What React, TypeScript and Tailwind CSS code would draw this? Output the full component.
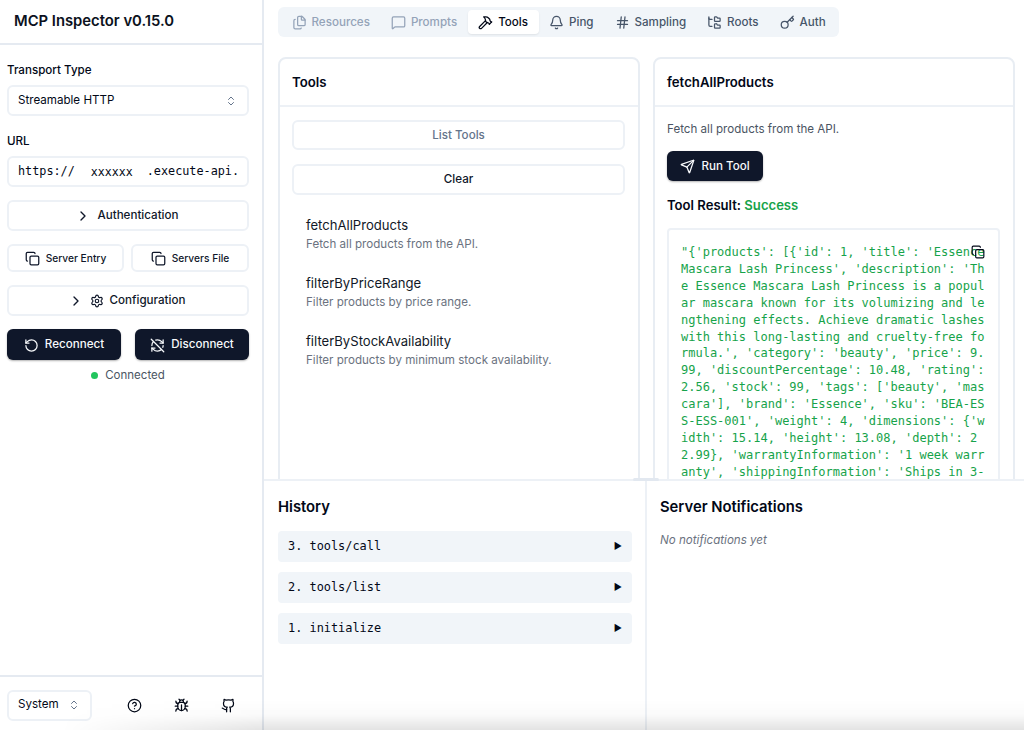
import React from "react";
import {
  Files, MessageSquare, Hammer, Bell, Hash, FolderTree, Key, ChevronsUpDown, ChevronRight, Settings,
  RotateCcw, RefreshCwOff, Copy, Send, CircleHelp, Bug, Github,
} from "lucide-react";

const RESULT = `"{'products': [{'id': 1, 'title': 'Essence Mascara Lash Princess', 'description': 'The Essence Mascara Lash Princess is a popular mascara known for its volumizing and lengthening effects. Achieve dramatic lashes with this long-lasting and cruelty-free formula.', 'category': 'beauty', 'price': 9.99, 'discountPercentage': 10.48, 'rating': 2.56, 'stock': 99, 'tags': ['beauty', 'mascara'], 'brand': 'Essence', 'sku': 'BEA-ESS-ESS-001', 'weight': 4, 'dimensions': {'width': 15.14, 'height': 13.08, 'depth': 22.99}, 'warrantyInformation': '1 week warranty', 'shippingInformation': 'Ships in 3-`;

const tabs = [
  { label: "Resources", Icon: Files, disabled: true },
  { label: "Prompts", Icon: MessageSquare, disabled: true },
  { label: "Tools", Icon: Hammer, active: true },
  { label: "Ping", Icon: Bell },
  { label: "Sampling", Icon: Hash },
  { label: "Roots", Icon: FolderTree },
  { label: "Auth", Icon: Key },
];

const tools = [
  ["fetchAllProducts", "Fetch all products from the API."],
  ["filterByPriceRange", "Filter products by price range."],
  ["filterByStockAvailability", "Filter products by minimum stock availability."],
];

function Outline({ children, className = "" }: { children: React.ReactNode; className?: string }) {
  return (
    <div className={"flex items-center justify-center rounded-md border-2 border-[#edf1f6] bg-white pt-[1px] font-medium text-[#0f172a] " + className}>
      {children}
    </div>
  );
}

function Dark({ children, className = "" }: { children: React.ReactNode; className?: string }) {
  return (
    <div className={"flex items-center justify-center rounded-md bg-[#0f172a] pt-[1px] text-[11.6px] font-medium text-[#f8fafc] shadow-[0_1px_2px_rgba(0,0,0,0.3)] " + className}>
      {children}
    </div>
  );
}

export default function App() {
  return (
    <div className="relative flex h-screen w-full overflow-hidden bg-white text-[#020817] [font-family:Inter,sans-serif]">
      <aside className="flex h-full w-[264px] shrink-0 flex-col border-r-2 border-[#e5eaf1]">
        <div className="flex h-[45px] shrink-0 items-center border-b-2 border-[#e5eaf1] pl-[14px]">
          <h1 className="text-[14.8px] font-semibold leading-none text-[#0b1120]">MCP Inspector v0.15.0</h1>
        </div>
        <div className="flex flex-1 flex-col pl-[7px] pr-[13px] pt-[16px]">
          <label className="text-[11.6px] font-medium leading-[18px]">Transport Type</label>
          <div className="mt-[6px] flex h-[31px] items-center justify-between rounded-md border-2 border-[#edf1f6] pl-[9px] pr-[10px] pt-[1px] text-[11.6px]">
            <span>Streamable HTTP</span>
            <ChevronsUpDown size={12} className="text-[#64748b]" />
          </div>
          <label className="mt-[16px] text-[11.6px] font-medium leading-[18px]">URL</label>
          <div className="mt-[6px] flex h-[31px] items-center overflow-hidden whitespace-nowrap rounded-md border-2 border-[#edf1f6] pl-[9px] pt-[1px] text-[11.8px] [font-family:'DejaVu_Sans_Mono',monospace]">
            <span>https://</span>
            <span className="ml-[16px] pt-[1px] text-[11.6px]">xxxxxx</span>
            <span className="ml-[14px]">.execute-api.</span>
          </div>
          <Outline className="mt-[13px] h-[31px] pr-[2px] text-[11.6px]">
            <ChevronRight size={16} className="mr-[6px]" />
            Authentication
          </Outline>
          <div className="mt-[13px] flex justify-between">
            <Outline className="h-[28px] w-[117px] text-[10.2px]">
              <Copy size={15} className="mr-[6px]" />
              Server Entry
            </Outline>
            <Outline className="h-[28px] w-[118px] text-[10.2px]">
              <Copy size={15} className="mr-[6px]" />
              Servers File
            </Outline>
          </div>
          <Outline className="mt-[13px] h-[31px] pr-[3px] text-[11.6px]">
            <ChevronRight size={16} className="mr-[6px]" />
            <Settings size={14} className="mr-[6px]" />
            Configuration
          </Outline>
          <div className="mt-[13px] flex justify-between">
            <Dark className="h-[31px] w-[114px]">
              <RotateCcw size={15} className="mr-[6px]" />
              Reconnect
            </Dark>
            <Dark className="h-[31px] w-[114px]">
              <RefreshCwOff size={15} className="mr-[6px]" />
              Disconnect
            </Dark>
          </div>
          <div className="mt-[7px] flex items-center justify-center text-[11.5px] leading-[16px] text-[#4b5563]">
            <span className="mr-[7px] h-[7px] w-[7px] rounded-full bg-[#22c55e]" />
            Connected
          </div>
        </div>
        <div className="flex h-[55px] shrink-0 items-center border-t-2 border-[#e5eaf1] pl-[7px] pt-[3px]">
          <div className="flex h-[31px] w-[85px] items-center justify-between rounded-md border-2 border-[#edf1f6] pl-[9px] pr-[10px] text-[11.6px]">
            System
            <ChevronsUpDown size={12} className="text-[#64748b]" />
          </div>
          <div className="ml-[35px] flex gap-[32px]">
            <CircleHelp size={15} />
            <Bug size={15} />
            <Github size={15} />
          </div>
        </div>
      </aside>

      <main className="flex min-w-0 flex-1 flex-col">
        <div className="h-[481px] shrink-0 overflow-hidden border-b-2 border-[#edf1f6] px-[14px] pt-[7px]">
          <div className="flex h-[30px] w-[561px] items-center rounded-md bg-[#f1f5f9] px-[3px] text-[11.6px] font-medium">
            {tabs.map(({ label, Icon, active, disabled }) => (
              <div
                key={label}
                className={
                  "flex h-[24px] items-center rounded px-[10.5px] pt-[1px] " +
                  (active
                    ? "bg-white text-[#020817] shadow-[0_1px_2px_rgba(0,0,0,0.08)]"
                    : disabled
                    ? "text-[#94a3b8]"
                    : "text-[#475569]")
                }
              >
                <Icon size={15} className="mr-[5px]" />
                {label}
              </div>
            ))}
          </div>

          <div className="mt-[20px] flex gap-[13px]">
            <section className="h-[500px] w-[362px] shrink-0 rounded-lg border-2 border-[#e8edf3]">
              <div className="flex h-[48px] items-center border-b-2 border-[#edf1f6] px-[12px] pt-[1px]">
                <h3 className="text-[13.2px] font-semibold">Tools</h3>
              </div>
              <div className="pl-[12px] pr-[13px] pt-[13px]">
                <Outline className="h-[30px] text-[11.6px]">
                  <span className="text-[#64748b]">List Tools</span>
                </Outline>
                <Outline className="mt-[14px] h-[31px] border-[#e2e8f0] text-[11.6px]">Clear</Outline>
                <div className="mt-[21px] flex flex-col gap-[21px] pl-[14px]">
                  {tools.map(([n, d]) => (
                    <div key={n}>
                      <div className="text-[13.1px] leading-[18px] text-[#111827]">{n}</div>
                      <div className="mt-[2px] text-[11.6px] leading-[17px] text-[#6b7280]">{d}</div>
                    </div>
                  ))}
                </div>
              </div>
            </section>

            <section className="h-[500px] w-[362px] shrink-0 rounded-lg border-2 border-[#e8edf3]">
              <div className="flex h-[48px] items-center border-b-2 border-[#edf1f6] px-[12px] pt-[1px]">
                <h3 className="text-[13.2px] font-semibold">fetchAllProducts</h3>
              </div>
              <div className="pl-[12px] pr-[13px] pt-[14px]">
                <p className="text-[11.6px] leading-[17px] text-[#4b5563]">Fetch all products from the API.</p>
                <Dark className="mt-[13px] h-[30px] w-[96px]">
                  <Send size={15} className="mr-[6px]" />
                  Run Tool
                </Dark>
                <h4 className="mt-[14px] text-[13.1px] font-semibold leading-[20px]">
                  Tool Result: <span className="text-[#16a34a]">Success</span>
                </h4>
                <div className="relative mt-[13px] h-[300px] rounded border-2 border-[#edf1f6] pl-[12px] pr-[9px] pt-[14px]">
                  <pre className="whitespace-normal break-all text-[12px] leading-[16.9px] text-[#16a34a] [font-family:'DejaVu_Sans_Mono',monospace]">
                    {RESULT}
                  </pre>
                  <Copy size={14} className="absolute right-[13px] top-[15px] text-[#020817]" />
                </div>
              </div>
            </section>
          </div>
        </div>

        <div className="relative flex min-h-0 flex-1">
          <div className="absolute left-[369px] top-[-3px] h-[3px] w-[26px] rounded-sm bg-[#e2e8f0]" />
          <section className="w-[383px] shrink-0 border-r-2 border-[#edf1f6] pl-[14px] pr-[13px] pt-[14px]">
            <h2 className="text-[14.8px] font-semibold leading-[24px]">History</h2>
            <div className="mt-[12px] flex flex-col gap-[10px]">
              {["3. tools/call", "2. tools/list", "1. initialize"].map((t) => (
                <div key={t} className="flex h-[31px] items-center justify-between rounded bg-[#f1f5f9] px-[10px] pt-[1px]">
                  <span className="text-[11.9px] [font-family:'DejaVu_Sans_Mono',monospace]">{t}</span>
                  <span className="-mt-[3px] text-[9px] leading-none">▶</span>
                </div>
              ))}
            </div>
          </section>
          <section className="flex-1 pl-[13px] pt-[14px]">
            <h2 className="text-[14.8px] font-semibold leading-[24px]">Server Notifications</h2>
            <p className="mt-[13px] text-[11.6px] italic leading-[17px] text-[#6b7280]">No notifications yet</p>
          </section>
        </div>
      </main>

      <div className="pointer-events-none absolute inset-x-0 bottom-0 h-[30px] bg-linear-to-b from-transparent via-[rgba(0,0,0,0.02)] to-[rgba(0,0,0,0.11)] [mask-image:linear-gradient(to_right,transparent_6%,black_26%)]" />
    </div>
  );
}
